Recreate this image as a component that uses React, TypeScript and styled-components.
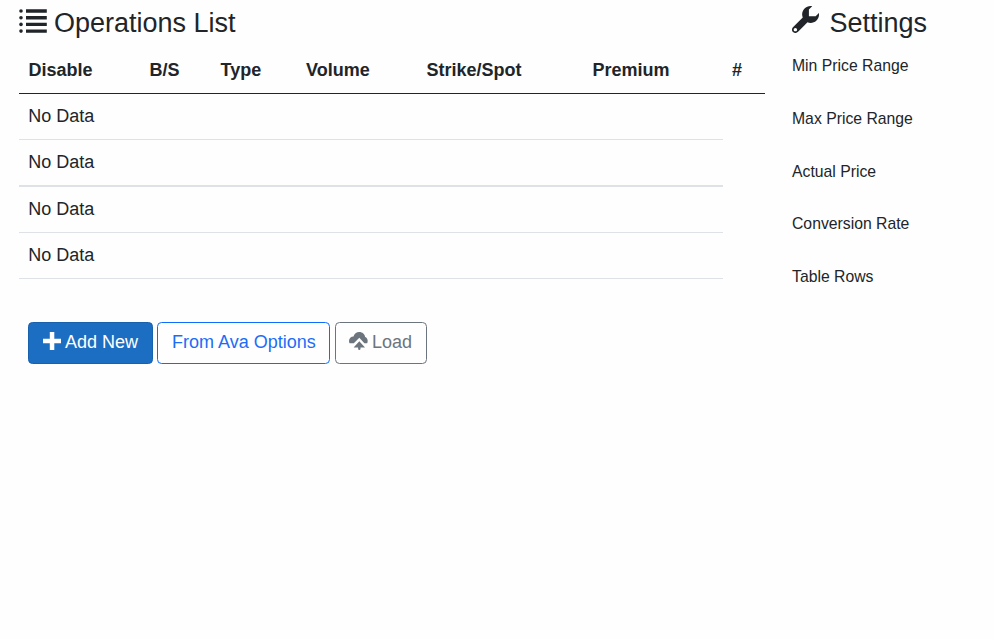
import React from 'react';
import styled, { createGlobalStyle } from 'styled-components';

const GlobalStyle = createGlobalStyle`
  * { box-sizing: border-box; }
  body {
    margin: 0;
    background: #fefefe;
    color: #212529;
    font: 18px/27px "Liberation Sans", Arial, sans-serif;
  }
`;

const Page = styled.div`
  display: grid;
  grid-template-columns: 746px 1fr;
  column-gap: 27px;
  min-height: 639px;
  padding: 6px 0 0 19px;
`;

const Heading = styled.h4<{ $gap: number }>`
  display: flex;
  align-items: flex-start;
  gap: ${(p) => p.$gap}px;
  height: 41px;
  margin: 0;
  font-size: 27px;
  font-weight: 400;
  line-height: 34px;
  white-space: nowrap;
`;

const Glyph = styled.svg`
  display: block;
  flex: none;
  fill: currentColor;
`;

const HeaderRow = styled.div`
  display: grid;
  grid-template-columns: 121px 71px 85.5px 120.5px 166px 139.5px 1fr;
  height: 47px;
  padding-top: 10px;
  border-bottom: 1px solid #212529;
  font-weight: 700;
`;

const HeaderCell = styled.div`
  padding-left: 9.5px;
`;

const Row = styled.div<{ $line: number }>`
  width: 704px;
  padding: 9px 9.25px;
  border-bottom: ${(p) => p.$line}px solid #dee2e6;
`;

const Actions = styled.div`
  display: flex;
  padding: 43px 0 0 9px;
`;

const Button = styled.button<{ $width: number; $ink: string; $edge: string; $fill?: string }>`
  display: flex;
  align-items: center;
  gap: 4px;
  width: ${(p) => p.$width}px;
  height: 42px;
  padding: 0 0 2px 14px;
  border: 1px solid ${(p) => p.$edge};
  border-radius: 4.5px;
  background: ${(p) => p.$fill ?? 'transparent'};
  color: ${(p) => p.$ink};
  font: inherit;
  white-space: nowrap;

  & + & { margin-left: 4px; }
  & + & + & { margin-left: 5px; padding-left: 13px; }

  ${Glyph} { margin-bottom: 2px; }
`;

const Label = styled.label`
  display: block;
  height: 52.75px;
  padding-top: 5.1px;
  font-size: 15.75px;
  line-height: 27px;
`;

const ListIcon = () => (
  <Glyph width="28" height="32" viewBox="0 0 28 32">
    <circle cx="2" cy="5" r="1.8" />
    <circle cx="2" cy="11.7" r="1.8" />
    <circle cx="2" cy="18.4" r="1.8" />
    <circle cx="2" cy="25.1" r="1.8" />
    <path d="M7 3.3h20.8v3.4H7zM7 10h20.8v3.4H7zM7 16.7h20.8v3.4H7zM7 23.4h20.8v3.4H7z" />
  </Glyph>
);

const WrenchIcon = () => (
  <Glyph width="27" height="27" viewBox="0 0 8 8">
    <path d="M5.5 0c-1.38 0-2.5 1.12-2.5 2.5 0 .32.08.62.19.91l-2.91 2.88c-.39.39-.39 1.05 0 1.44.2.2.46.28.72.28.26 0 .52-.09.72-.28l2.88-2.91c.28.11.58.19.91.19 1.38 0 2.5-1.12 2.5-2.5 0-.16 0-.32-.03-.47l-.97.97h-2v-2l.97-.97c-.15-.03-.31-.03-.47-.03zm-4.5 6.5c.28 0 .5.22.5.5s-.22.5-.5.5-.5-.22-.5-.5.22-.5.5-.5z" />
  </Glyph>
);

const PlusIcon = () => (
  <Glyph width="18" height="18" viewBox="0 0 18 18">
    <path d="M6.8 0h4.5v6.8H18v4.5h-6.7V18H6.8v-6.7H0V6.8h6.8z" />
  </Glyph>
);

const CloudUploadIcon = () => (
  <Glyph width="19" height="18" viewBox="0 0 19 18">
    <path d="M10.3 0C7.4 0 5.1 1.8 4.5 4.5 2 4.5 0 6.5 0 9c0 .8.2 1.6.6 2.2h4.2l5.5-5.4 5.1 5.4h2.8c.3-.7.5-1.4.5-2.1 0-1.9-1-3.4-2.6-4C15.9 2.2 13.4 0 10.3 0Z" />
    <path d="m10.3 9.2-5.7 6.2h4.5v1.4a1.2 1.2 0 0 0 2.4 0v-1.4h4.5z" />
  </Glyph>
);

const columns = ['Disable', 'B/S', 'Type', 'Volume', 'Strike/Spot', 'Premium', '#'];
const rowLines = [1, 2, 1, 1];
const settings = ['Min Price Range', 'Max Price Range', 'Actual Price', 'Conversion Rate', 'Table Rows'];

export default function App() {
  return (
    <>
      <GlobalStyle />
      <Page>
        <main>
          <Heading $gap={7}><ListIcon />Operations List</Heading>
          <HeaderRow>
            {columns.map((name) => <HeaderCell key={name}>{name}</HeaderCell>)}
          </HeaderRow>
          {rowLines.map((line, i) => <Row key={i} $line={line}>No Data</Row>)}
          <Actions>
            <Button $width={125} $ink="#fff" $edge="#1861ac" $fill="#1b6ec2"><PlusIcon />Add New</Button>
            <Button $width={173} $ink="#1c6cf8" $edge="#0d6efd">From Ava Options</Button>
            <Button $width={92} $ink="#6c757d" $edge="#6c757d"><CloudUploadIcon />Load</Button>
          </Actions>
        </main>
        <aside>
          <Heading $gap={10.5}><WrenchIcon />Settings</Heading>
          {settings.map((name) => <Label key={name}>{name}</Label>)}
        </aside>
      </Page>
    </>
  );
}
